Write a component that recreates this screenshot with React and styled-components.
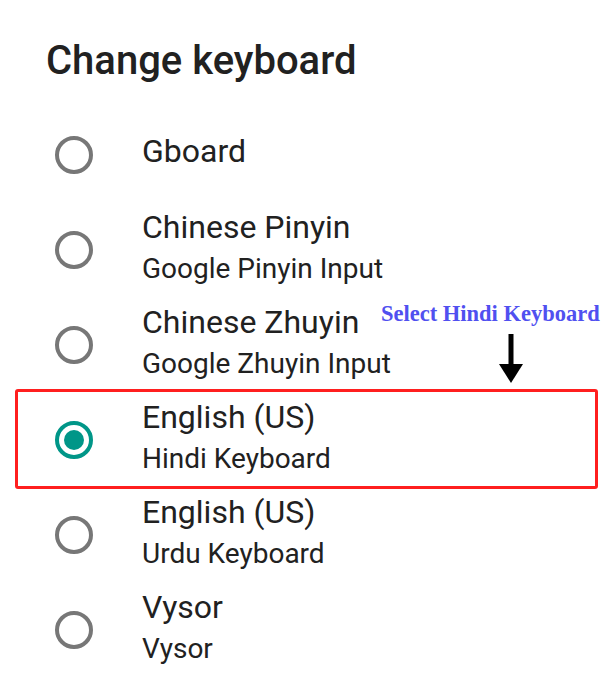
import React from 'react';
import styled, { createGlobalStyle } from 'styled-components';

const GlobalStyle = createGlobalStyle`
  body {
    margin: 0;
    background: #fff;
    font-family: Roboto, "Liberation Sans", sans-serif;
  }
`;

const Page = styled.div`
  position: relative;
  width: 612px;
  height: 687px;
  overflow: hidden;
  background: #fff;
`;

const Title = styled.h1`
  margin: 0;
  padding: 37px 0 0 46px;
  font-size: 40px;
  line-height: 48px;
  font-weight: 500;
  color: #212121;
`;

const List = styled.div`
  display: flex;
  flex-direction: column;
  margin-top: 22px;
`;

const Row = styled.div`
  position: relative;
  display: flex;
  align-items: center;
  height: 95px;
  padding-left: 55px;
  gap: 49px;

  ${p => p.$highlight && `
    &::after {
      content: '';
      position: absolute;
      left: 15px;
      right: 14px;
      top: -3px;
      bottom: -2px;
      border: 3px solid #ff1f1f;
      border-radius: 3px;
      pointer-events: none;
    }
  `}
`;

const Radio = styled.span`
  flex: none;
  width: 38px;
  height: 38px;
  box-sizing: border-box;
  border-radius: 50%;
  border: ${p => (p.$checked ? '4.5px solid #009688' : '4px solid #777')};
  display: flex;
  align-items: center;
  justify-content: center;

  &::before {
    content: '';
    display: ${p => (p.$checked ? 'block' : 'none')};
    width: 20px;
    height: 20px;
    border-radius: 50%;
    background: #009688;
  }
`;

const Texts = styled.div`
  display: flex;
  flex-direction: column;
  color: #212121;
  margin-top: ${p => (p.$single ? '-6px' : '-4px')};
`;

const Primary = styled.div`
  font-size: 32px;
  line-height: 41px;
`;

const Secondary = styled.div`
  font-size: 28px;
  line-height: 41px;
`;

const Note = styled.div`
  position: absolute;
  left: 381px;
  top: 300px;
  display: flex;
  flex-direction: column;
  align-items: center;
`;

const NoteText = styled.div`
  font-family: "Liberation Serif", "DejaVu Serif", serif;
  font-weight: bold;
  font-size: 22.5px;
  line-height: 27px;
  color: #5050f0;
  white-space: nowrap;
`;

const Arrow = styled.svg`
  display: block;
  margin-top: 7px;
  margin-left: 42px;
`;

const items = [
  { name: 'Gboard' },
  { name: 'Chinese Pinyin', sub: 'Google Pinyin Input' },
  { name: 'Chinese Zhuyin', sub: 'Google Zhuyin Input' },
  { name: 'English (US)', sub: 'Hindi Keyboard', checked: true },
  { name: 'English (US)', sub: 'Urdu Keyboard' },
  { name: 'Vysor', sub: 'Vysor' },
];

const App = () => {
  return (
    <Page>
      <GlobalStyle />
      <Title>Change keyboard</Title>
      <List>
        {items.map((item, i) => (
          <Row key={i} $highlight={item.checked}>
            <Radio $checked={item.checked} />
            <Texts $single={!item.sub}>
              <Primary>{item.name}</Primary>
              {item.sub && <Secondary>{item.sub}</Secondary>}
            </Texts>
          </Row>
        ))}
      </List>
      <Note>
        <NoteText>Select Hindi Keyboard</NoteText>
        <Arrow width="24" height="50" viewBox="0 0 24 50">
          <rect x="9.5" y="0" width="5" height="33" fill="#000" />
          <polygon points="0,30 24,30 12,49" fill="#000" />
        </Arrow>
      </Note>
    </Page>
  );
};

export default App;
